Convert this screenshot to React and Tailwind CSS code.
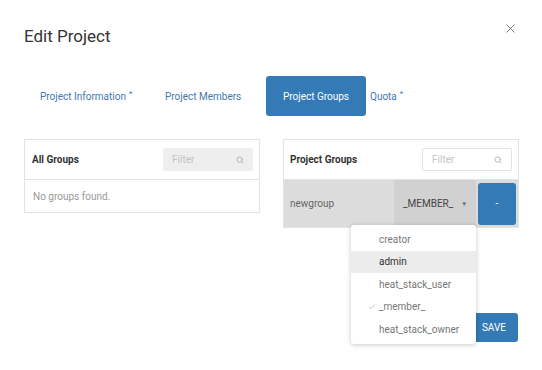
import React from "react";
import { X, Search, Check } from "lucide-react";

const roles = ["creator", "admin", "heat_stack_user", "_member_", "heat_stack_owner"];

const FilterBox = ({ muted }) => (
  <div
    className={
      "flex items-center justify-between h-[23px] rounded-[2px] pl-[9px] pr-[9px] " +
      (muted ? "w-[90px] bg-[#eeeeee]" : "w-[90px] bg-white border border-[#e3e3e3]")
    }
  >
    <span className="text-[10px] text-[#c4c4c4]">Filter</span>
    <Search size={8} strokeWidth={2} className="text-[#999]" />
  </div>
);

export default function App() {
  return (
    <div className="relative w-[542px] h-[370px] bg-white font-['Roboto',sans-serif] overflow-hidden">
      <div className="flex items-center justify-between pt-[24px] pl-[24px] pr-[24px]">
        <h1 className="text-[17px] leading-[24px] text-[#333]">Edit Project</h1>
        <X size={15} strokeWidth={1.2} className="text-[#555] -mt-[16px]" />
      </div>

      <div className="flex items-center h-[40px] mt-[28px] pl-[40px] text-[10px]">
        <div className="w-[125px] text-[#3f78ab]">
          Project Information<sup className="text-[8px] ml-[3px]">*</sup>
        </div>
        <div className="w-[101px] text-[#3f78ab]">Project Members</div>
        <div className="w-[100px] h-[40px] flex items-center justify-center rounded-[3px] bg-[#337ab7] text-white">
          Project Groups
        </div>
        <div className="pl-[4px] text-[#3f78ab]">
          Quota<sup className="text-[8px] ml-[3px]">*</sup>
        </div>
      </div>

      <div className="grid grid-cols-2 gap-[23px] mt-[23px] ml-[24px] w-[495px] items-start">
        <div className="border border-[#e3e3e3]">
          <div className="flex items-center justify-between h-[40px] pl-[7px] pr-[6px] border-b border-[#e3e3e3]">
            <span className="text-[10px] font-bold text-[#333]">All Groups</span>
            <FilterBox muted />
          </div>
          <div className="h-[32px] flex items-center pl-[8px] text-[10px] text-[#999]">
            No groups found.
          </div>
        </div>

        <div className="border border-[#e3e3e3]">
          <div className="flex items-center justify-between h-[40px] pl-[6px] pr-[6px] border-b border-[#e3e3e3]">
            <span className="text-[10px] font-bold text-[#333]">Project Groups</span>
            <FilterBox />
          </div>
          <div className="flex items-center h-[47px] bg-[#dcdcdc] pr-[2px]">
            <span className="flex-1 pl-[6px] text-[10px] text-[#666]">newgroup</span>
            <div className="relative w-[82px] h-full bg-[#d1d1d1] flex items-center pl-[9px] text-[10px] text-[#444]">
              _MEMBER_
              <span className="ml-[8px] text-[6px] text-[#666]">▼</span>
              <div className="absolute left-[-43px] top-[45px] w-[125px] py-[3px] bg-white rounded-[3px] shadow-[0_1px_5px_rgba(0,0,0,0.22)] z-10">
                {roles.map((r) => (
                  <div
                    key={r}
                    className={
                      "relative h-[22.5px] flex items-center pl-[28px] text-[10px] " +
                      (r === "admin" ? "bg-[#ececec] text-[#333]" : "text-[#777]")
                    }
                  >
                    {r === "_member_" && (
                      <Check size={8} strokeWidth={1.5} className="absolute left-[17px] text-[#888]" />
                    )}
                    {r}
                  </div>
                ))}
              </div>
            </div>
            <button className="ml-[2px] w-[38px] h-[42px] rounded-[3px] bg-[#337ab7] text-white text-[10px]">
              -
            </button>
          </div>
        </div>
      </div>

      <div className="flex justify-end mt-[85px] pr-[24px]">
        <button className="h-[29px] px-[12px] rounded-[3px] bg-[#337ab7] text-white text-[10px]">
          SAVE
        </button>
      </div>
    </div>
  );
}
